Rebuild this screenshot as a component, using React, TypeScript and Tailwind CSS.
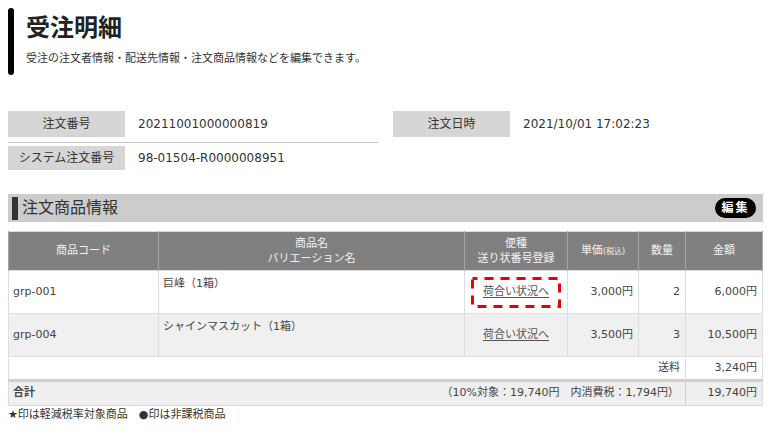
import React from "react";

const items = [
  { code: "grp-001", name: "巨峰（1箱）", price: "3,000円", qty: "2", amount: "6,000円", marked: true },
  { code: "grp-004", name: "シャインマスカット（1箱）", price: "3,500円", qty: "3", amount: "10,500円", marked: false },
];

function InfoRow({ label, value, tall }: { label: string; value: string; tall?: boolean }) {
  return (
    <div className={`flex items-center ${tall ? "h-[26px]" : "h-[24px]"}`}>
      <div className="flex h-full w-[117px] shrink-0 items-center justify-center bg-[#d6d6d6] text-[12px] text-[#333]">
        {label}
      </div>
      <div className="pl-[13px] text-[12px] text-[#333]">{value}</div>
    </div>
  );
}

export default function App() {
  return (
    <div className="min-h-screen bg-white px-2 pt-2 font-['DejaVu_Sans','Noto_Sans_CJK_JP',sans-serif] text-[#333]">
      {/* page heading */}
      <div className="flex h-[67px]">
        <div className="w-[6px] rounded-sm bg-black" />
        <div className="pl-[12px] pt-[4px]">
          <h1 className="text-[24px] font-bold leading-[32px] text-[#222]">受注明細</h1>
          <p className="mt-[7px] text-[11px] leading-[16px] text-[#333]">
            受注の注文者情報・配送先情報・注文商品情報などを編集できます。
          </p>
        </div>
      </div>

      {/* order info */}
      <div className="mt-[36px] grid grid-cols-2 gap-[15px]">
        <div>
          <InfoRow label="注文番号" value="20211001000000819" tall />
          <div className="mt-[5px] border-t border-[#c8c8c8]" />
          <div className="mt-[3px]">
            <InfoRow label="システム注文番号" value="98-01504-R0000008951" />
          </div>
        </div>
        <div>
          <InfoRow label="注文日時" value="2021/10/01 17:02:23" tall />
        </div>
      </div>

      {/* section header */}
      <div className="mt-[24px] flex h-[28px] items-center bg-[#cccccc] pl-[4px] pr-[7px]">
        <div className="h-[23px] w-[6px] bg-[#333]" />
        <span className="ml-[4px] text-[16px] text-[#333]">注文商品情報</span>
        <button
          type="button"
          className="ml-auto flex h-[20px] w-[41px] items-center justify-center rounded-full bg-black text-[12px] font-bold tracking-[2px] text-white"
        >
          編集
        </button>
      </div>

      {/* items table */}
      <table className="mt-[9px] w-full table-fixed border-collapse border border-[#dddddd] text-[11px] text-[#444]">
        <colgroup>
          <col className="w-[150px]" />
          <col className="w-[306px]" />
          <col className="w-[103px]" />
          <col className="w-[71px]" />
          <col className="w-[47px]" />
          <col />
        </colgroup>
        <thead>
          <tr className="h-[39px] bg-[#808080] text-[#f2f2f2]">
            <th className="border-x border-[#a6a6a6] font-normal">商品コード</th>
            <th className="border-x border-[#a6a6a6] font-normal leading-[15px]">
              商品名
              <br />
              バリエーション名
            </th>
            <th className="border-x border-[#a6a6a6] font-normal leading-[15px]">
              便種
              <br />
              送り状番号登録
            </th>
            <th className="border-x border-[#a6a6a6] font-normal">
              単価<span className="text-[8px]">(税込)</span>
            </th>
            <th className="border-x border-[#a6a6a6] font-normal">数量</th>
            <th className="border-x border-[#a6a6a6] font-normal">金額</th>
          </tr>
        </thead>
        <tbody>
          {items.map((it, i) => (
            <tr
              key={it.code}
              className={`h-[43px] border-t border-[#dddddd] ${i % 2 === 1 ? "bg-[#f0f0f0]" : "bg-white"}`}
            >
              <td className="border border-[#dddddd] px-[4px]">{it.code}</td>
              <td className="border border-[#dddddd] px-[4px] pt-[5px] align-top">{it.name}</td>
              <td className="border border-[#dddddd] px-[6px] text-center">
                <div className="relative flex h-[31px] items-center justify-center">
                  {it.marked && (
                    <svg className="absolute inset-0 h-full w-full" preserveAspectRatio="none">
                      <rect
                        x="1.5"
                        y="1.5"
                        width="calc(100% - 3px)"
                        height="calc(100% - 3px)"
                        fill="none"
                        stroke="#ee0000"
                        strokeWidth="3"
                        strokeDasharray="9 7"
                        strokeDashoffset="4"
                      />
                    </svg>
                  )}
                  <a href="#" className="text-[#555] underline underline-offset-2">
                    荷合い状況へ
                  </a>
                </div>
              </td>
              <td className="border border-[#dddddd] px-[5px] text-right">{it.price}</td>
              <td className="border border-[#dddddd] px-[5px] text-right">{it.qty}</td>
              <td className="border border-[#dddddd] px-[5px] text-right">{it.amount}</td>
            </tr>
          ))}
          <tr className="h-[24px] bg-white">
            <td colSpan={5} className="border border-[#dddddd] px-[5px] text-right">
              送料
            </td>
            <td className="border border-[#dddddd] px-[5px] text-right">3,240円</td>
          </tr>
          <tr className="h-[25px] border-t-[3px] border-[#d0d0d0] bg-[#efefef]">
            <td className="border-t-[3px] border-[#d0d0d0] px-[4px] font-bold">合計</td>
            <td colSpan={4} className="border-t-[3px] border-r border-[#d0d0d0] px-[6px] text-right">
              （10%対象：19,740円　内消費税：1,794円）
            </td>
            <td className="border-t-[3px] border-[#d0d0d0] px-[5px] text-right">19,740円</td>
          </tr>
        </tbody>
      </table>
      <p className="mt-[1px] text-[11px] leading-[16px] text-[#333]">★印は軽減税率対象商品　●印は非課税商品</p>
    </div>
  );
}
